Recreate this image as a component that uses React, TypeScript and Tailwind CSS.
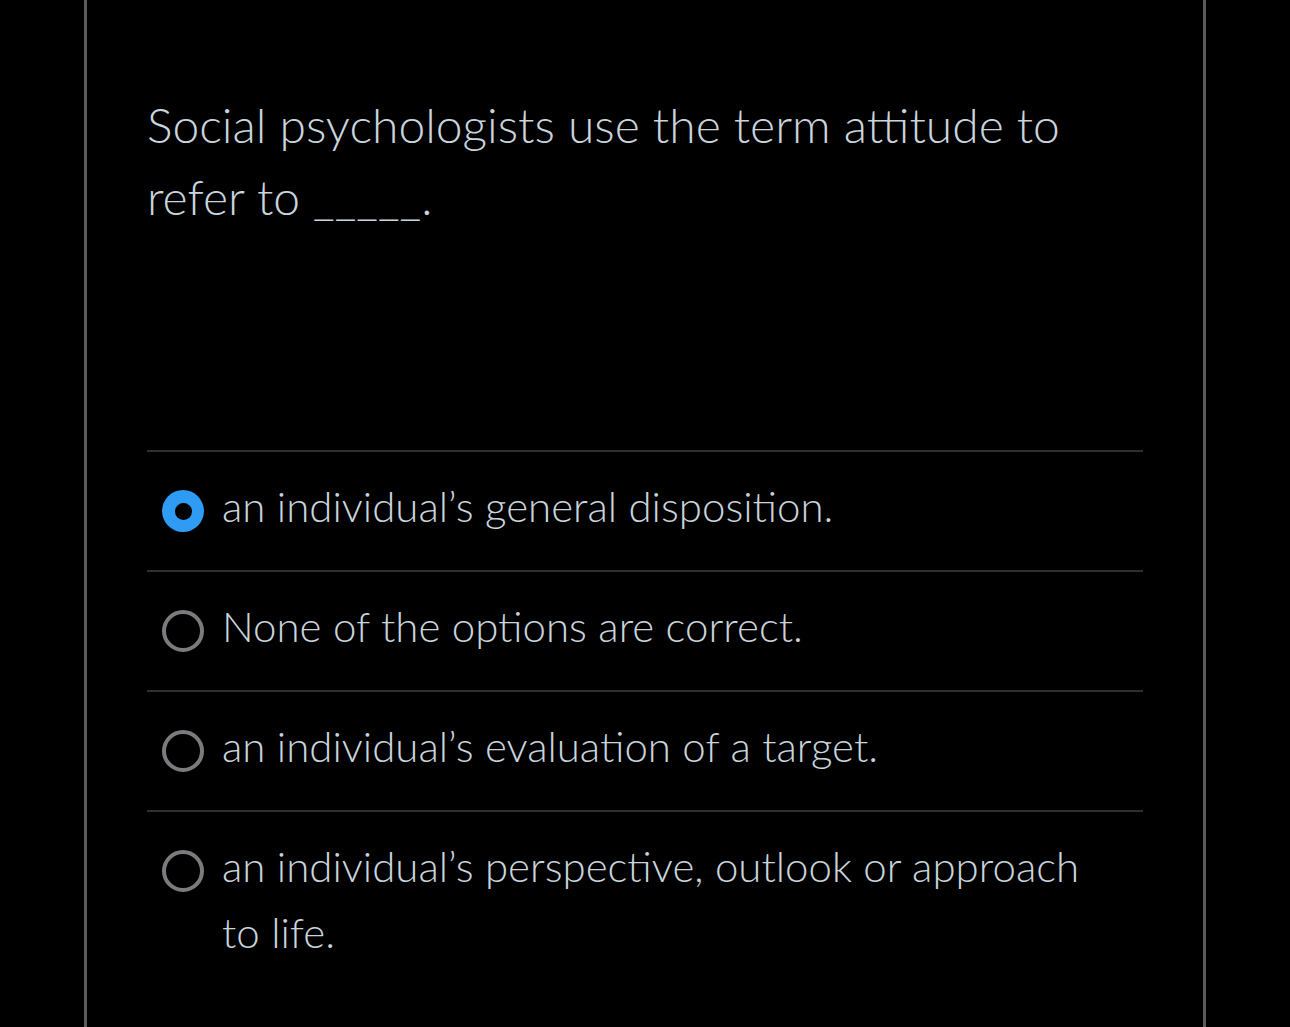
import React from "react";

const options = [
  { text: "an individual\u2019s general disposition.", selected: true },
  { text: "None of the options are correct.", selected: false },
  { text: "an individual\u2019s evaluation of a target.", selected: false },
  { text: "an individual\u2019s perspective, outlook or approach to life.", selected: false },
];

function Radio({ selected }: { selected: boolean }) {
  if (selected) {
    return (
      <div className="w-[42px] h-[42px] shrink-0 rounded-full bg-[#2e9bf4] flex items-center justify-center">
        <div className="w-[17px] h-[17px] rounded-full bg-black" />
      </div>
    );
  }
  return <div className="w-[42px] h-[42px] shrink-0 rounded-full border-[4px] border-[#7b7b7e]" />;
}

export default function App() {
  return (
    <div className="w-[1290px] h-[1027px] bg-black overflow-hidden" style={{ fontFamily: "Lato, 'Open Sans', sans-serif" }}>
      <div className="ml-[84px] w-[1122px] h-full border-x-[3px] border-[#5b5b5b] px-[60px]">
        <div className="pt-[89px] text-[48px] leading-[72px] font-light text-[#c9d5dd]">
          Social psychologists use the term attitude to refer to _____.
        </div>
        <div className="mt-[217px]">
          {options.map((o, i) => (
            <div key={i} className="border-t-[2px] border-[#2f2f2f] pt-[21px] pb-[31px] pl-[15px] pr-[60px] flex items-start gap-[18px]">
              <div className="mt-[17px]">
                <Radio selected={o.selected} />
              </div>
              <div className="text-[42px] leading-[66px] font-light text-[#c9d5dd]">{o.text}</div>
            </div>
          ))}
        </div>
      </div>
    </div>
  );
}
